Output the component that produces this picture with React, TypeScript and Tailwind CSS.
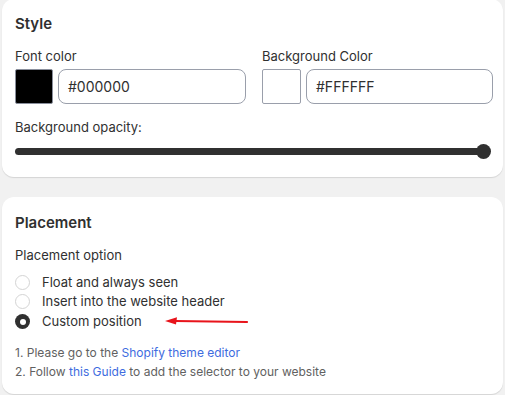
export default function App() {
  const font = { fontFamily: 'Inter, "Noto Sans", sans-serif' };
  return (
    <main
      className="min-h-screen w-[505px] h-[395px] overflow-hidden bg-[#f1f1f1] px-[2px] text-[#303030]"
      style={font}
    >
      {/* Style card */}
      <section className="-mt-[1px] rounded-xl bg-white pl-[13px] pr-[10px] pt-[15px] pb-[18px] shadow-[0_1px_1px_rgba(0,0,0,0.12)]">
        <h2 className="text-[15px] font-semibold leading-[20px]">Style</h2>
        <div className="mt-[13px] grid grid-cols-2 gap-x-[16px]">
          <div>
            <div className="text-[13px] leading-[18px]">Font color</div>
            <div className="mt-[4px] flex gap-[5px]">
              <div className="h-[35px] w-[38px] shrink-0 rounded-[2px] border border-[#8a8f9c] bg-black" />
              <div className="flex h-[35px] flex-1 items-center rounded-lg border border-[#9a9fab] px-[9px] text-[14px]">
                #000000
              </div>
            </div>
          </div>
          <div>
            <div className="text-[13px] leading-[18px]">Background Color</div>
            <div className="mt-[4px] flex gap-[5px]">
              <div className="h-[35px] w-[39px] shrink-0 rounded-[2px] border border-[#9a9fab] bg-white" />
              <div className="flex h-[35px] flex-1 items-center rounded-lg border border-[#9a9fab] px-[9px] text-[14px]">
                #FFFFFF
              </div>
            </div>
          </div>
        </div>
        <div className="mt-[14px] text-[13px] leading-[18px]">Background opacity:</div>
        <div className="mt-[7px] flex h-[16px] items-center pr-[2px]">
          <div className="h-[7px] flex-1 rounded-full bg-[#303030]" />
          <div className="-ml-[8px] h-[15px] w-[15px] rounded-full bg-[#303030]" />
        </div>
      </section>

      {/* Placement card */}
      <section className="mt-[20px] rounded-xl bg-white pl-[13px] pr-[10px] pt-[16px] pb-[13px] shadow-[0_1px_1px_rgba(0,0,0,0.12)]">
        <h2 className="text-[15px] font-semibold leading-[20px]">Placement</h2>
        <div className="mt-[13px] text-[13px] leading-[18px]">Placement option</div>
        <div className="mt-[9px] flex flex-col text-[13px] leading-[19px]">
          <label className="flex items-center gap-[12px]">
            <span className="h-[15px] w-[15px] rounded-full border border-[#d4d4d4]" />
            <span>Float and always seen</span>
          </label>
          <label className="flex items-center gap-[12px]">
            <span className="h-[15px] w-[15px] rounded-full border border-[#d4d4d4]" />
            <span>Insert into the website header</span>
          </label>
          <label className="relative flex items-center gap-[12px] pt-px">
            <span className="flex h-[15px] w-[15px] items-center justify-center rounded-full bg-[#303030]">
              <span className="h-[6px] w-[6px] rounded-full bg-white" />
            </span>
            <span>Custom position</span>
            <svg
              className="absolute left-[148px] top-[4px]"
              width="86"
              height="12"
              viewBox="0 0 86 12"
            >
              <path d="M12 6 L84 7" stroke="#e8141b" strokeWidth="2.2" fill="none" strokeLinecap="round" />
              <path d="M2 6 L14 2.2 L13 9.5 Z" fill="#e8141b" />
            </svg>
          </label>
        </div>
        <div className="mt-[12px] text-[12px] leading-[19px] text-[#616161]">
          <p>
            1. Please go to the <span className="text-[#3e6ce0]">Shopify theme editor</span>
          </p>
          <p>
            2. Follow <span className="text-[#3e6ce0]">this Guide</span> to add the selector to your website
          </p>
        </div>
      </section>
    </main>
  );
}
